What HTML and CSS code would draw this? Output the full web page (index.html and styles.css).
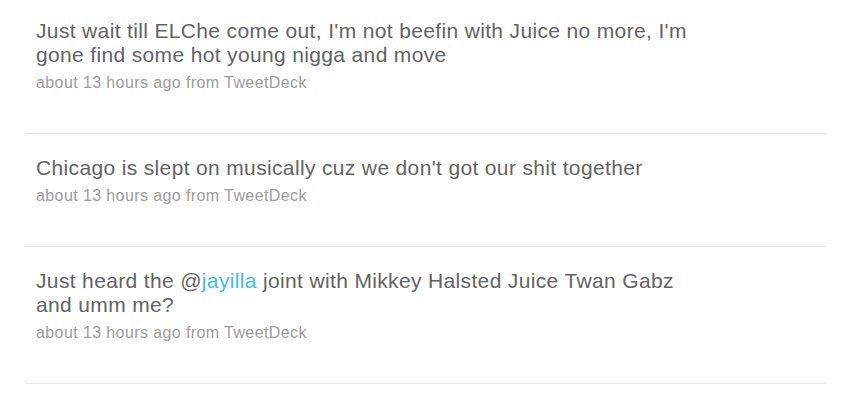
FILE: index.html
```html
<!DOCTYPE html>
<html>
<head>
<meta charset="utf-8">
<link rel="stylesheet" href="styles.css">
</head>
<body>
<ol class="timeline">
  <li class="tweet">
    <p class="tweet-text">Just wait till ELChe come out, I'm not beefin with Juice no more, I'm gone find some hot young nigga and move</p>
    <p class="tweet-meta">about 13 hours ago from TweetDeck</p>
  </li>
  <li class="tweet">
    <p class="tweet-text">Chicago is slept on musically cuz we don't got our shit together</p>
    <p class="tweet-meta">about 13 hours ago from TweetDeck</p>
  </li>
  <li class="tweet">
    <p class="tweet-text">Just heard the @<a class="mention" href="#">jayilla</a> joint with Mikkey Halsted Juice Twan Gabz and umm me?</p>
    <p class="tweet-meta">about 13 hours ago from TweetDeck</p>
  </li>
</ol>
</body>
</html>
```
FILE: styles.css
```css
html, body {
  margin: 0;
  padding: 0;
  background: #ffffff;
}

body {
  font-family: "Liberation Sans", Arial, sans-serif;
}

.timeline {
  list-style: none;
  margin: 0 0 0 25px;
  padding: 0;
  width: 801px;
}

.tweet {
  padding: 22px 0 40px 11px;
  border-bottom: 1px solid #e8e8e8;
}

.tweet:first-child {
  padding-top: 19px;
}

.tweet-text {
  margin: 0;
  max-width: 666px;
  font-size: 21px;
  line-height: 24px;
  letter-spacing: 0.35px;
  color: #636363;
}

.mention {
  color: #3dbde8;
  text-decoration: none;
}

.tweet-meta {
  margin: 6px 0 0;
  font-size: 16px;
  line-height: 20px;
  letter-spacing: 0.4px;
  color: #9c9c9c;
}
```
